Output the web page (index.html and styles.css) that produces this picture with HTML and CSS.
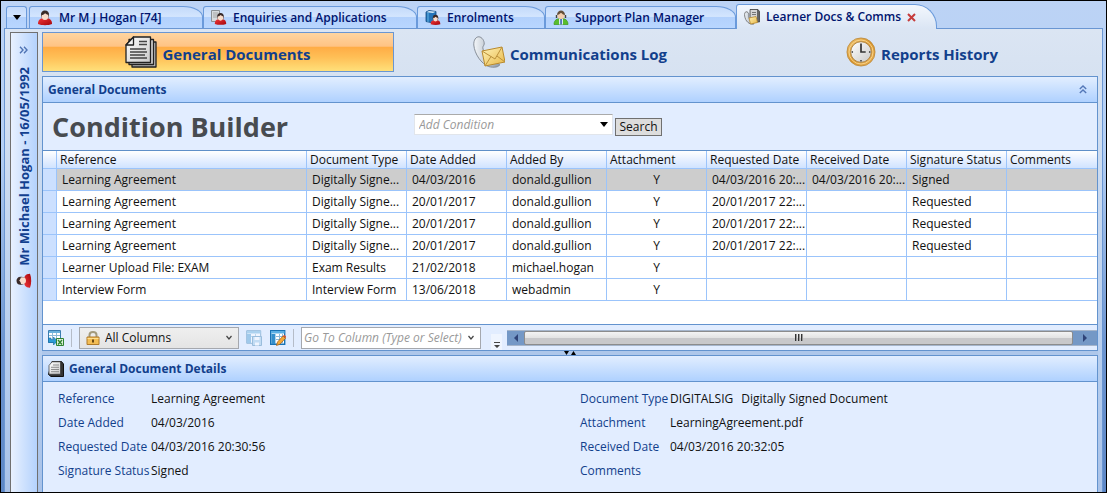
FILE: index.html
```html
<!DOCTYPE html>
<html lang="en">
<head>
<meta charset="utf-8">
<title>Learner Docs &amp; Comms</title>
<link rel="stylesheet" href="styles.css">
</head>
<body>
<svg class="defs" aria-hidden="true">
  <defs>
    <linearGradient id="red" x1="0" y1="0" x2="1" y2="1"><stop offset="0" stop-color="#f4373b"/><stop offset="1" stop-color="#a3050b"/></linearGradient>
    <linearGradient id="paper" x1="0" y1="0" x2="1" y2="1"><stop offset="0" stop-color="#ffffff"/><stop offset="1" stop-color="#c9c9c9"/></linearGradient>
    <linearGradient id="gold" x1="0" y1="0" x2="1" y2="1"><stop offset="0" stop-color="#fff3b8"/><stop offset="1" stop-color="#e8b848"/></linearGradient>
    <linearGradient id="steel" x1="0" y1="0" x2="1" y2="0"><stop offset="0" stop-color="#f3f6f9"/><stop offset="1" stop-color="#8f9cab"/></linearGradient>
    <linearGradient id="rim" x1="0" y1="0" x2="1" y2="1"><stop offset="0" stop-color="#f0c878"/><stop offset="0.5" stop-color="#d9962c"/><stop offset="1" stop-color="#e9b45c"/></linearGradient>
    <symbol id="person" viewBox="0 0 16 16">
      <path d="M1 14c0-5 3-6 7-6s7 1 7 6c-4 1.600-10 1.600-14 0z" fill="url(#red)"/>
      <path d="M4 5.500C3.700 2 5.500.5 8 .5s4.300 1.700 4 5c-.2 2-1 3-2 3.500H6c-1-.5-1.700-1.500-2-3.500z" fill="#3a2a28"/>
      <ellipse cx="8" cy="6.300" rx="3.400" ry="3.700" fill="#f9dccb"/>
      <path d="M4.600 5c1.500 0 2.700-.8 3.400-1.800C9 4 10 4.600 11.400 5L11 2.500 8 1 5 2.500z" fill="#3a2a28"/>
    </symbol>
    <symbol id="docs" viewBox="0 0 32 32">
      <g stroke="#222" stroke-width="1.300" stroke-linejoin="round">
        <path d="M7 6h24v25H7z" fill="#b8b8b8"/>
        <path d="M4 3.500h24.500v25H4z" fill="#d2d2d2"/>
        <path d="M8.500 1H25.500v25.500H1V9z" fill="url(#paper)"/>
        <path d="M1 9h7.500V1z" fill="#f4f4f4"/>
      </g>
      <path d="M14 5.500h8M14 8.500h8M5 13h16M5 16h17M5 19h15M5 22h17" stroke="#444" stroke-width="1.300"/>
    </symbol>
    <symbol id="docthick" viewBox="0 0 16 16">
      <path d="M4 .5h9.500l2 2.500v12.500H3l-2.500-2z" fill="#333" stroke="#111"/>
      <path d="M4 .8h8.500v12.400H1V4.500z" fill="url(#paper)" stroke="#333" stroke-width=".7"/>
      <path d="M5 4h6M3 6.300h8M3 8.500h8M3 10.700h8" stroke="#777" stroke-width=".8"/>
    </symbol>
    <symbol id="phone" viewBox="0 0 32 32">
      <path d="M.8 9C.5 4 3 .6 6 .8c3 .3 5.500 4 5.200 7.200-.2 2-2 2-1.200 5 1 4 4 9 7 11 3 1 9 2 9.500 4.500.3 2.500-6 3.500-11 2C8.500 28 1.500 18 .8 9z" fill="url(#steel)" stroke="#7d858f" stroke-width=".9"/>
      <path d="M9 15l20-4 3 15-20 4z" fill="url(#gold)" stroke="#b98a2e"/>
      <path d="M9 15l13 8 7-12M12 30l6-9.500M32 26l-8-6" fill="none" stroke="#bb913b"/>
    </symbol>
    <symbol id="clock" viewBox="0 0 32 32">
      <circle cx="16" cy="16" r="15" fill="url(#rim)" stroke="#b78335" stroke-width=".8"/>
      <circle cx="16" cy="16" r="12.800" fill="none" stroke="#f9d38c" stroke-width="1"/>
      <circle cx="16" cy="16" r="11" fill="url(#paper)" stroke="#ad8446" stroke-width="1"/>
      <path d="M16 7v9h5" fill="none" stroke="#333" stroke-width="1.800"/>
      <path d="M16 24.500v1.500M6 16h1.500M24.500 16H26" stroke="#333" stroke-width="1.500"/>
    </symbol>
    <symbol id="enquiry" viewBox="0 0 16 16">
      <path d="M.5.5h8v11h-8z" fill="#d7dbde" stroke="#8a8f94"/>
      <path d="M2 3h5M2 5h5M2 7h4" stroke="#a6a6a6"/>
      <svg x="3" y="2" width="13" height="14"><use href="#person"/></svg>
    </symbol>
    <symbol id="enrol" viewBox="0 0 16 16">
      <path d="M1 2l3-1.500 7 1v10L8 13l-7-1.500z" fill="#2474b8" stroke="#134a80" stroke-width=".8"/>
      <path d="M1.500 2.300L4 1l6.500.8L8 3z" fill="#d8eaf7"/>
      <path d="M3 3v9" stroke="#65b4e4"/>
      <svg x="5" y="4" width="11" height="12"><use href="#person"/></svg>
    </symbol>
    <symbol id="support" viewBox="0 0 16 16">
      <path d="M1 14.500C1 10 4 8.500 8 8.500s7 1.500 7 6z" fill="#59bd2b" stroke="#3b9a18" stroke-width=".7"/>
      <path d="M6 9h4v5.500H6z" fill="#d9e8fa"/><path d="M7.300 9h1.500v5.500H7.300z" fill="#315ea8"/>
      <circle cx="8" cy="5.500" r="3.600" fill="#f3cfb0"/>
      <path d="M4 5c0-6 8-6 8 0-3-.5-3-2-4-2S7 4.500 4 5z" fill="#65503b"/>
      <path d="M3.500 5v3M12.500 5v3" stroke="#444" stroke-width="1.400"/>
    </symbol>
    <symbol id="comms" viewBox="0 0 16 16">
      <path d="M6 .5h8l1.500 2V13H6z" fill="#666" stroke="#333" stroke-width=".7"/>
      <path d="M6.500 1h6.500v10H6.500z" fill="#d5d5d5"/><path d="M8 3.500h4M8 5.500h4" stroke="#777"/>
      <path d="M.7 7C0 3.500 2 1.500 4 3.500s0 3 1 5.500 4 3 5 6c-5 1-8.600-3-9.300-8z" fill="url(#steel)" stroke="#666" stroke-width=".8"/>
      <path d="M5 9l7-1.500 1.500 6L6.500 15z" fill="url(#gold)" stroke="#b98a2e" stroke-width=".8"/>
    </symbol>
    <symbol id="grid" viewBox="0 0 16 16">
      <path d="M.5.500h12v12H.500z" fill="#fff" stroke="#3a7db0"/><path d="M1 1h11v2H1z" fill="#6bb2dc"/>
      <path d="M1 6h11M1 9h11M4.500 3v9M8.500 3v9" stroke="#8dbbd8"/>
    </symbol>
    <symbol id="export" viewBox="0 0 16 16">
      <path d="M.5.500h12v12H.500z" fill="#fff" stroke="#3a7db0"/><path d="M1 1h11v2H1z" fill="#6bb2dc"/>
      <path d="M1 5.500h11M4.500 3v6M8.500 3v6" stroke="#8dbbd8"/>
      <path d="M.5 8v4.500h5V15l4-4-4-4v2.500H3V8z" fill="#2e9bd6" stroke="#176a9e" stroke-width=".6"/>
      <path d="M8.500 8.500h7v7h-7z" fill="#e2f3dd" stroke="#2f8332"/><path d="M10 10l4 4.500M14 10l-4 4.500" stroke="#2f8332" stroke-width="1.400"/>
    </symbol>
    <symbol id="savecols" viewBox="0 0 16 16">
      <g opacity=".45"><path d="M.7.7h14v12.600H.7z" fill="#fff" stroke="#3a7db0"/><path d="M1 1h13.500v2.500H1z" fill="#6bb2dc"/><path d="M5 6.500h9M9.500 4v9" stroke="#8dbbd8"/>
      <path d="M1 4h4v9H1z" fill="#4f9fd4"/><path d="M6.500 6.500h9v9h-9z" fill="#9cc9e8" stroke="#4484b2"/><path d="M8.500 7h5v3h-5zM9 12.500h4v3H9z" fill="#fff"/></g>
    </symbol>
    <symbol id="editcols" viewBox="0 0 16 16">
      <path d="M.7.7h14v13.600H.7z" fill="#fff" stroke="#1973b5" stroke-width="1.400"/><path d="M1 1h13.500v2.500H1z" fill="#5bb0e5"/>
      <path d="M1.400 4h4v10h-4z" fill="#338fcc"/><path d="M6 6.500h8M6 9.500h8M9.500 4v10M12.500 4v10" stroke="#8ab8d8"/>
      <path d="M6.500 15.500l1-3.500 5.500-6 2.500 2.300-5.700 6z" fill="#f5a936" stroke="#a05a13" stroke-width=".7"/><path d="M13 6l1.200-1.200 2 2L15.500 8z" fill="#d9532f"/>
    </symbol>
    <symbol id="lock" viewBox="0 0 14 14">
      <path d="M3.500 7V4c0-4 7-4 7 0v3" fill="none" stroke="#a39a7c" stroke-width="2"/>
      <path d="M1 6h12v7.500H1z" fill="#f3bd55" stroke="#b07a2a"/><path d="M1.500 7.500h11" stroke="#ffe08f"/><path d="M7 8.500v3" stroke="#5c3b0d" stroke-width="1.800"/>
    </symbol>
    <symbol id="down" viewBox="0 0 8 5"><path d="M0 0h8L4 5z"/></symbol>
    <symbol id="chevron" viewBox="0 0 8 6"><path d="M1.500 1L4 4l2.500-3" fill="none" stroke="currentColor" stroke-width="1.200"/></symbol>
    <symbol id="chevrons" viewBox="0 0 8 9"><path d="M.8 4L4 1l3.200 3M.8 8L4 5l3.200 3" fill="none" stroke="currentColor" stroke-width="1.400"/></symbol>
    <symbol id="left" viewBox="0 0 4 8"><path d="M4 0v8L0 4z" fill="currentColor"/></symbol>
  </defs>
</svg>

<div class="window">
  <nav class="tabs">
    <button class="tab-menu" aria-label="Open tabs"><svg class="tri"><use href="#down"/></svg></button>
    <button class="tab tab-learner"><svg class="i16"><use href="#person"/></svg><span>Mr M J Hogan [74]</span></button>
    <button class="tab tab-enquiries"><svg class="i16"><use href="#enquiry"/></svg><span>Enquiries and Applications</span></button>
    <button class="tab tab-enrolments"><svg class="i16"><use href="#enrol"/></svg><span>Enrolments</span></button>
    <button class="tab tab-support"><svg class="i16"><use href="#support"/></svg><span>Support Plan Manager</span></button>
    <button class="tab tab-active"><svg class="i16"><use href="#comms"/></svg><span>Learner Docs &amp; Comms</span><svg class="close" viewBox="0 0 9 9"><path d="M1 1l7 7M8 1L1 8"/></svg></button>
  </nav>

  <div class="frame">
    <aside class="side">
      <button class="expand" aria-label="Expand panel"><svg class="chev2"><use href="#chevrons"/></svg></button>
      <div class="side-label"><svg class="i16"><use href="#person"/></svg><span>Mr Michael Hogan - 16/05/1992</span></div>
    </aside>

    <main class="main">
      <nav class="views">
        <button class="view view-on"><svg class="i32"><use href="#docs"/></svg><span>General Documents</span></button>
        <button class="view"><svg class="i32"><use href="#phone"/></svg><span>Communications Log</span></button>
        <button class="view"><svg class="i30"><use href="#clock"/></svg><span>Reports History</span></button>
      </nav>

      <section class="panel">
        <header class="bar"><h2>General Documents</h2><button class="collapse" aria-label="Collapse"><svg class="chev2"><use href="#chevrons"/></svg></button></header>
        <div class="builder">
          <h1>Condition Builder</h1>
          <label class="combo"><input type="text" placeholder="Add Condition" aria-label="Add Condition"><svg class="tri"><use href="#down"/></svg></label>
          <button class="search">Search</button>
        </div>
        <div class="grid">
          <table>
            <colgroup><col class="c-head"><col class="c-ref"><col class="c"><col class="c"><col class="c"><col class="c"><col class="c"><col class="c"><col class="c"><col></colgroup>
            <thead><tr><th></th><th>Reference</th><th>Document Type</th><th>Date Added</th><th>Added By</th><th>Attachment</th><th>Requested Date</th><th>Received Date</th><th>Signature Status</th><th>Comments</th></tr></thead>
            <tbody>
              <tr class="selected"><td></td><td>Learning Agreement</td><td>Digitally Signe...</td><td>04/03/2016</td><td>donald.gullion</td><td class="mid">Y</td><td>04/03/2016 20:...</td><td>04/03/2016 20:...</td><td>Signed</td><td></td></tr>
              <tr><td></td><td>Learning Agreement</td><td>Digitally Signe...</td><td>20/01/2017</td><td>donald.gullion</td><td class="mid">Y</td><td>20/01/2017 22:...</td><td></td><td>Requested</td><td></td></tr>
              <tr><td></td><td>Learning Agreement</td><td>Digitally Signe...</td><td>20/01/2017</td><td>donald.gullion</td><td class="mid">Y</td><td>20/01/2017 22:...</td><td></td><td>Requested</td><td></td></tr>
              <tr><td></td><td>Learning Agreement</td><td>Digitally Signe...</td><td>20/01/2017</td><td>donald.gullion</td><td class="mid">Y</td><td>20/01/2017 22:...</td><td></td><td>Requested</td><td></td></tr>
              <tr><td></td><td>Learner Upload File: EXAM</td><td>Exam Results</td><td>21/02/2018</td><td>michael.hogan</td><td class="mid">Y</td><td></td><td></td><td></td><td></td></tr>
              <tr><td></td><td>Interview Form</td><td>Interview Form</td><td>13/06/2018</td><td>webadmin</td><td class="mid">Y</td><td></td><td></td><td></td><td></td></tr>
            </tbody>
          </table>
        </div>
        <footer class="tools">
          <button class="tool" aria-label="Export"><svg class="i16"><use href="#export"/></svg></button>
          <i class="sep"></i>
          <label class="columns"><svg class="i14"><use href="#lock"/></svg><select aria-label="Columns"><option>All Columns</option></select><svg class="chev"><use href="#chevron"/></svg></label>
          <button class="tool" aria-label="Save columns"><svg class="i16"><use href="#savecols"/></svg></button>
          <button class="tool" aria-label="Edit columns"><svg class="i16"><use href="#editcols"/></svg></button>
          <i class="sep"></i>
          <label class="goto"><input type="text" placeholder="Go To Column (Type or Select)" aria-label="Go to column"><svg class="chev"><use href="#chevron"/></svg></label>
          <button class="overflow" aria-label="More"><svg viewBox="0 0 6 6"><path d="M0 0h6v1H0zM0 3h6L3 6z" fill="#444"/></svg></button>
          <div class="scroll">
            <button aria-label="Scroll left"><svg><use href="#left"/></svg></button>
            <div class="thumb"><i></i><i></i><i></i></div>
            <button class="flip" aria-label="Scroll right"><svg><use href="#left"/></svg></button>
          </div>
        </footer>
      </section>

      <div class="splitter"><svg viewBox="0 0 12 4"><path d="M0 0h5L2.500 4zM7 4h5L9.500 0z"/></svg></div>

      <section class="details">
        <header class="bar"><svg class="i16"><use href="#docthick"/></svg><h2>General Document Details</h2></header>
        <div class="facts">
          <dl>
            <dt>Reference</dt><dd>Learning Agreement</dd>
            <dt>Date Added</dt><dd>04/03/2016</dd>
            <dt>Requested Date</dt><dd>04/03/2016 20:30:56</dd>
            <dt>Signature Status</dt><dd>Signed</dd>
          </dl>
          <dl>
            <dt>Document Type</dt><dd class="pair"><span>DIGITALSIG</span><span>Digitally Signed Document</span></dd>
            <dt>Attachment</dt><dd>LearningAgreement.pdf</dd>
            <dt>Received Date</dt><dd>04/03/2016 20:32:05</dd>
            <dt>Comments</dt><dd></dd>
          </dl>
        </div>
      </section>
    </main>
  </div>
</div>
</body>
</html>
```

FILE: styles.css
```css
* { box-sizing: border-box; }
body { margin: 0; font: 12px/16px "Segoe UI", "Open Sans", "Noto Sans", sans-serif; color: #111; }
button, input, select { font: inherit; color: inherit; margin: 0; padding: 0; border: 0; background: none; border-radius: 0; }
svg { display: block; flex: none; }
h1, h2, dl, dd { margin: 0; }
.defs { position: absolute; width: 0; height: 0; }
.i14 { width: 14px; height: 14px; }
.i16 { width: 16px; height: 16px; }
.i30 { width: 30px; height: 30px; }
.i32 { width: 32px; height: 32px; }
.tri { width: 8px; height: 5px; }
.chev { width: 8px; height: 6px; color: #444; }
.chev2 { width: 8px; height: 9px; }

.window { display: flex; flex-direction: column; min-height: 100vh; border: 1px solid #000; padding: 3px 3px 0 3px; background: linear-gradient(#bcd3f5, #b5d0f5 30%, #6d95d0 70%, #5d87c6); }

.tabs { display: flex; align-items: flex-end; position: relative; z-index: 1; height: 24px; padding-left: 2px; }
.tab, .tab-menu { height: 22px; border: 1px solid #6a9adb; border-bottom: 0; background: linear-gradient(#c4dafa, #d3e5fe 45%, #b3d1fc 50%, #b8d6ff); }
.tab-menu { display: flex; align-items: center; justify-content: center; width: 21px; margin-right: 2px; border-radius: 3px 3px 0 0; }
.tab { display: flex; align-items: center; gap: 6px; padding-left: 7px; white-space: nowrap; font-weight: 600; color: #00146e; border-radius: 3px 20px 0 0 / 3px 11px 0 0; }
.tab-learner { width: 174px; }
.tab-enquiries { width: 214px; }
.tab-enrolments { width: 128px; }
.tab-support { width: 191px; }
.tab-active { width: 201px; height: 25px; margin-bottom: -1px; border-radius: 3px 22px 0 0 / 3px 22px 0 0; background: linear-gradient(#f3f7fd, #dae5f4); }
.close { width: 9px; height: 9px; fill: none; stroke: #c63b3b; stroke-width: 2; }

.frame { flex: 1; display: flex; gap: 4px; padding: 3px 4px 0 5px; border: 1px solid #6a96d2; border-bottom: 0; background: linear-gradient(#dbe5f3, #d5e1f1 60px, #b5cdee 340px, #a9c2e8); }
.side { display: flex; flex-direction: column; align-items: center; width: 28px; border: 1px solid #707070; border-bottom: 0; background: linear-gradient(90deg, #e8f1ff, #b4d2fd); }
.expand { height: 34px; color: #4f73b3; transform: rotate(90deg); }
.side-label { display: flex; align-items: center; gap: 7px; writing-mode: vertical-rl; transform: rotate(180deg); font-size: 13px; font-weight: 700; line-height: 20px; color: #123f8f; white-space: nowrap; }
.side-label .i16 { transform: rotate(90deg); }

.main { flex: 1; min-width: 0; display: flex; flex-direction: column; }
.views { display: grid; grid-template-columns: repeat(3, 1fr); height: 40px; margin-bottom: 4px; }
.view { display: flex; align-items: center; justify-content: center; gap: 5px; border: 1px solid transparent; font-size: 15px; line-height: 20px; font-weight: 700; color: #123f8c; white-space: nowrap; }
.view span { padding-top: 4px; }
.view-on { border-color: #6a96d2; background: linear-gradient(#ffd5a0, #ffc384 35%, #ffac45 37%, #ffc057 65%, #ffe07a); }

.panel { border: 1px solid #6393ce; background: #e2edff; }
.bar { display: flex; align-items: center; gap: 5px; height: 26px; padding: 0 10px 0 5px; border-bottom: 1px solid #6393ce; background: linear-gradient(#e2eeff, #afd1ff); }
.bar h2 { flex: 1; font-size: 12px; line-height: 16px; font-weight: 700; color: #123f8c; }
.collapse { color: #5478b8; }
.builder { display: flex; align-items: center; height: 47px; padding-left: 9px; }
h1 { flex: none; width: 362px; font-size: 27px; line-height: 36px; font-weight: 700; color: #474b50; white-space: nowrap; }
.combo { display: flex; align-items: center; width: 199px; height: 21px; margin: 0 2px 4px 0; padding: 0 4px; border: 1px solid #e1e5eb; border-top-color: #aaa; background: #fff; }
.combo input, .goto input { flex: 1; min-width: 0; outline: 0; }
.combo input::placeholder, .goto input::placeholder { color: #999; font-style: italic; opacity: 1; }
.search { width: 47px; height: 18px; border: 1px solid #707070; background: #ddd; line-height: 16px; }

.grid { min-height: 174px; border-top: 1px solid #5f8fc8; background: #fff; }
table { width: 100%; table-layout: fixed; border-collapse: separate; border-spacing: 0; }
.c-head { width: 14px; }
.c-ref { width: 250px; }
.c { width: 100px; }
th, td { padding: 0 0 0 5px; border-right: 1px solid #9bc4fb; border-bottom: 1px solid #9bc4fb; text-align: left; font-weight: 400; white-space: nowrap; overflow: hidden; }
th { height: 18px; padding-left: 3px; line-height: 16px; background: linear-gradient(#fff, #e7f0ff 50%, #d0e3ff); }
td { height: 22px; line-height: 20px; }
th:last-child, td:last-child { border-right: 0; }
td:first-child { background: #cce0ff; }
.selected td:not(:first-child) { background: #cdcdcd; }
.mid { padding: 0; text-align: center; }

.tools { display: flex; align-items: center; height: 26px; padding-left: 5px; border-top: 1px solid #6393ce; }
.tool + .tool { margin-left: 8px; }
.sep { width: 1px; height: 18px; margin: 0 7px; background: #b5bcc8; }
.columns, .goto { display: flex; align-items: center; height: 22px; border: 1px solid #a5a8ae; }
.columns { width: 160px; margin-right: 7px; padding: 0 5px 0 6px; gap: 5px; background: linear-gradient(#efefef, #e4e4e4); }
.columns select { flex: 1; appearance: none; outline: 0; }
.goto { width: 180px; padding: 0 5px 0 2px; background: #fff; }
.overflow { align-self: flex-end; width: 11px; height: 16px; margin: 0 5px 0 10px; padding: 6px 2px 0 3px; background: #eff5ff; }
.overflow svg { width: 6px; height: 6px; }
.scroll { flex: 1; display: flex; height: 16px; border: 1px solid #a5b5cb; border-width: 1px 0; background: #7498c6; }
.scroll button { display: flex; align-items: center; justify-content: center; width: 17px; color: #2f4478; }
.scroll .flip { width: 24px; }
.scroll svg { width: 4px; height: 8px; }
.flip svg { transform: scaleX(-1); }
.thumb { flex: 1; display: flex; align-items: center; justify-content: center; gap: 1px; border: 1px solid #8c8c8c; border-radius: 2px; background: linear-gradient(#f4f4f4, #e3e3e3 48%, #c8c8ca 50%, #c8c8ca); }
.thumb i { width: 2px; height: 7px; background: linear-gradient(90deg, #333 50%, #999 50%); }

.splitter { display: flex; justify-content: center; height: 4px; background: #aec7ea; }
.splitter svg { width: 12px; height: 4px; }
.details { flex: 1; border: 1px solid #6393ce; border-bottom: 0; background: #e2edff; }
.facts { display: grid; grid-template-columns: 1fr 1fr; padding: 5px 5px 8px 15px; column-gap: 10px; }
dl { display: grid; grid-template-columns: 90px 1fr; column-gap: 3px; grid-auto-rows: 24px; align-items: center; white-space: nowrap; }
dl + dl { grid-template-columns: 87px 1fr; }
dt { font-weight: 500; color: #123f8c; }
.pair { display: flex; gap: 8px; }
```
